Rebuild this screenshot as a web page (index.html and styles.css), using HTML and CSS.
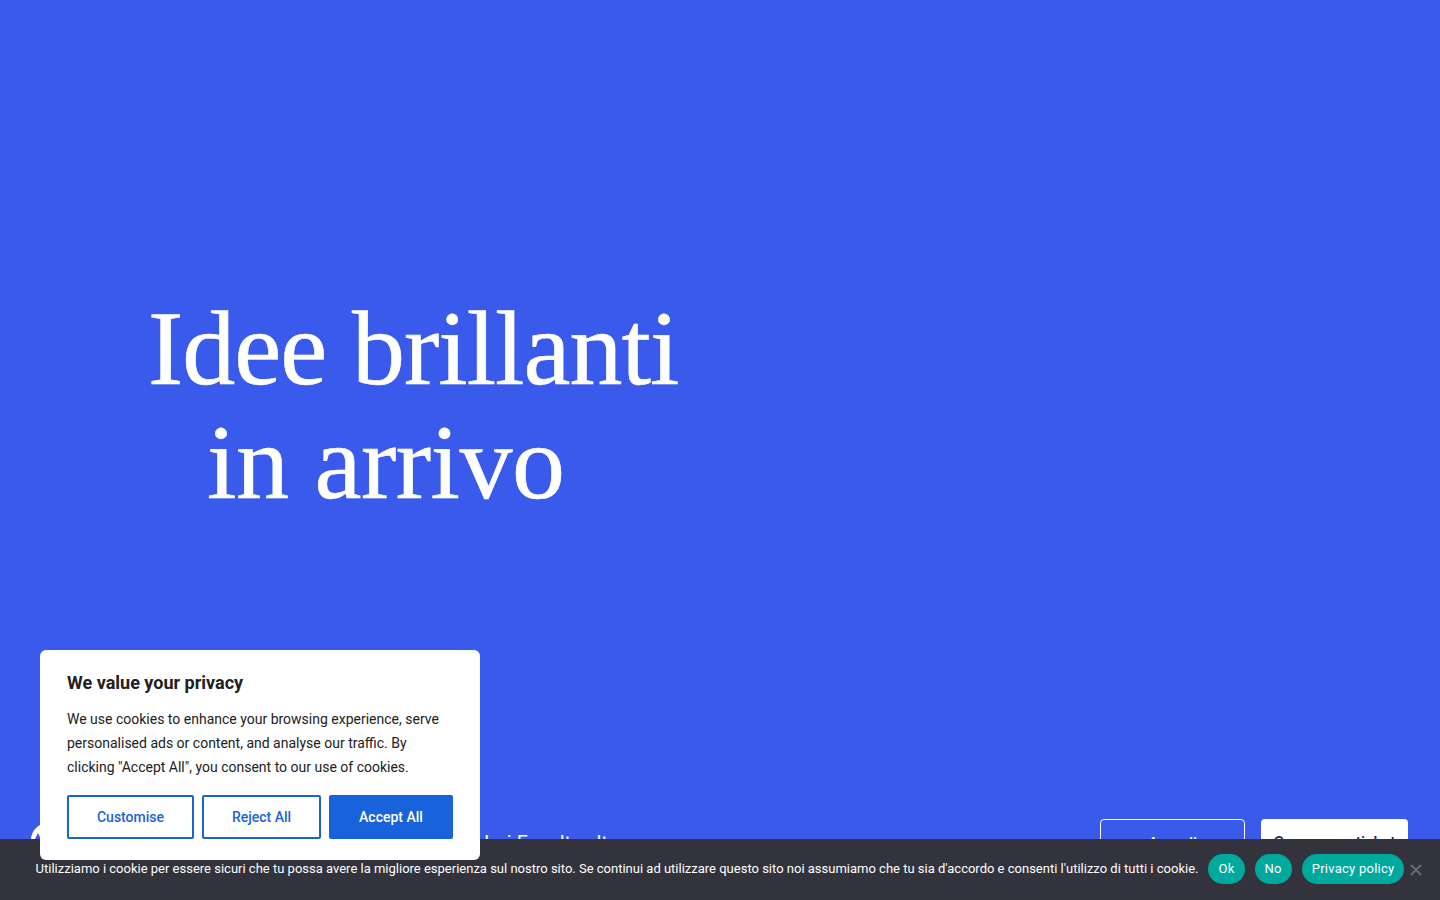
FILE: index.html
```html
<!DOCTYPE html>
<html lang="it">
<head>
    <meta charset="UTF-8">
    <meta name="viewport" content="width=device-width, initial-scale=1.0">
    <title>Idee brillanti in arrivo</title>
    <link rel="stylesheet" href="styles.css">
</head>
<body>
    <main class="hero">
        <h1><span class="hero-line">Idee brillanti</span><span class="hero-line hero-line-second">in arrivo</span></h1>
    </main>

    <nav class="nav">
        <svg class="nav-logo" width="34" height="34" viewBox="0 0 34 34"><circle cx="17" cy="17" r="17" fill="#fff"/><path d="M7 10L3 18h8z" fill="#395aeb"/></svg>
        <a class="nav-link" href="#">Ieri Faculty alta</a>
        <div class="nav-actions">
            <a class="nav-btn nav-btn-line" href="#">Accedi</a>
            <a class="nav-btn nav-btn-fill" href="#">Compra un ticket</a>
        </div>
    </nav>

    <div class="cookie-bar">
        <span class="cookie-bar-text">Utilizziamo i cookie per essere sicuri che tu possa avere la migliore esperienza sul nostro sito. Se continui ad utilizzare questo sito noi assumiamo che tu sia d'accordo e consenti l'utilizzo di tutti i cookie.</span>
        <a class="pill" href="#">Ok</a>
        <a class="pill" href="#">No</a>
        <a class="pill" href="#">Privacy policy</a>
        <svg class="cookie-close" width="12" height="12" viewBox="0 0 12 12"><path d="M1 1l10 10M11 1L1 11" stroke="#6a6b70" stroke-width="2"/></svg>
    </div>

    <section class="consent">
        <h2>We value your privacy</h2>
        <p>We use cookies to enhance your browsing experience, serve personalised ads or content, and analyse our traffic. By clicking "Accept All", you consent to our use of cookies.</p>
        <div class="consent-btns">
            <button class="btn btn-custom">Customise</button>
            <button class="btn btn-reject">Reject All</button>
            <button class="btn btn-accept">Accept All</button>
        </div>
    </section>
</body>
</html>
```

FILE: styles.css
```css
html, body {
    height: 100%;
}
body {
    margin: 0;
    background-color: #395aeb;
    font-family: Roboto, sans-serif;
    overflow: hidden;
    position: relative;
}
.hero {
    height: 819px;
    padding-top: 292px;
    padding-left: 148px;
    box-sizing: border-box;
}
.hero h1 {
    margin: 0;
    font-family: "Liberation Serif", serif;
    font-size: 106px;
    font-weight: 400;
    line-height: 114px;
    letter-spacing: -1px;
    color: #fff;
    -webkit-text-stroke: 0.6px #fff;
}
.hero-line {
    display: block;
}
.hero-line-second {
    margin-left: 59px;
    letter-spacing: -0.5px;
}
.nav {
    display: flex;
    align-items: flex-start;
    padding: 0 32px 0 31px;
}
.nav-logo {
    margin-top: 4px;
    flex-shrink: 0;
}
.nav-link {
    margin-left: 419px;
    margin-top: 12px;
    color: #fff;
    font-size: 20px;
    text-decoration: none;
}
.nav-actions {
    display: flex;
    gap: 16px;
    margin-left: auto;
}
.nav-btn {
    box-sizing: border-box;
    height: 48px;
    padding-top: 14px;
    border-radius: 4px;
    font-size: 16px;
    font-weight: 500;
    text-align: center;
    text-decoration: none;
}
.nav-btn-line {
    width: 145px;
    border: 1px solid #fff;
    color: #fff;
}
.nav-btn-fill {
    width: 147px;
    background-color: #fff;
    color: #1d2b6f;
}
.cookie-bar {
    position: absolute;
    left: 0;
    right: 0;
    bottom: 0;
    height: 61px;
    padding-bottom: 1px;
    box-sizing: border-box;
    display: flex;
    align-items: center;
    justify-content: center;
    gap: 10px;
    background-color: #32333c;
    color: #fff;
    font-size: 13px;
}
.cookie-bar-text {
    margin-bottom: 2px;
}
.pill {
    padding: 0 10px;
    height: 30px;
    line-height: 30px;
    border-radius: 15px;
    background-color: #00a99d;
    color: #fff;
    letter-spacing: 0.25px;
    text-decoration: none;
}
.cookie-close {
    position: absolute;
    right: 18px;
    top: 25px;
}
.consent {
    position: absolute;
    left: 40px;
    top: 650px;
    width: 440px;
    height: 210px;
    box-sizing: border-box;
    padding: 21px 27px;
    background-color: #fff;
    border-radius: 6px;
}
.consent h2 {
    margin: 0 0 12px;
    font-size: 18px;
    font-weight: 700;
    line-height: 24px;
    color: #212121;
}
.consent p {
    margin: 0 0 16px;
    font-size: 14px;
    line-height: 24px;
    color: #212121;
}
.consent-btns {
    display: flex;
    gap: 8px;
}
.btn {
    height: 44px;
    box-sizing: border-box;
    border: 2px solid #1863dc;
    border-radius: 2px;
    font-family: Roboto, sans-serif;
    font-size: 14px;
    font-weight: 500;
    cursor: pointer;
}
.btn-custom {
    width: 127px;
    background-color: #fff;
    color: #1863dc;
}
.btn-reject {
    width: 119px;
    background-color: #fff;
    color: #1863dc;
}
.btn-accept {
    width: 124px;
    background-color: #1863dc;
    color: #fff;
}
```
